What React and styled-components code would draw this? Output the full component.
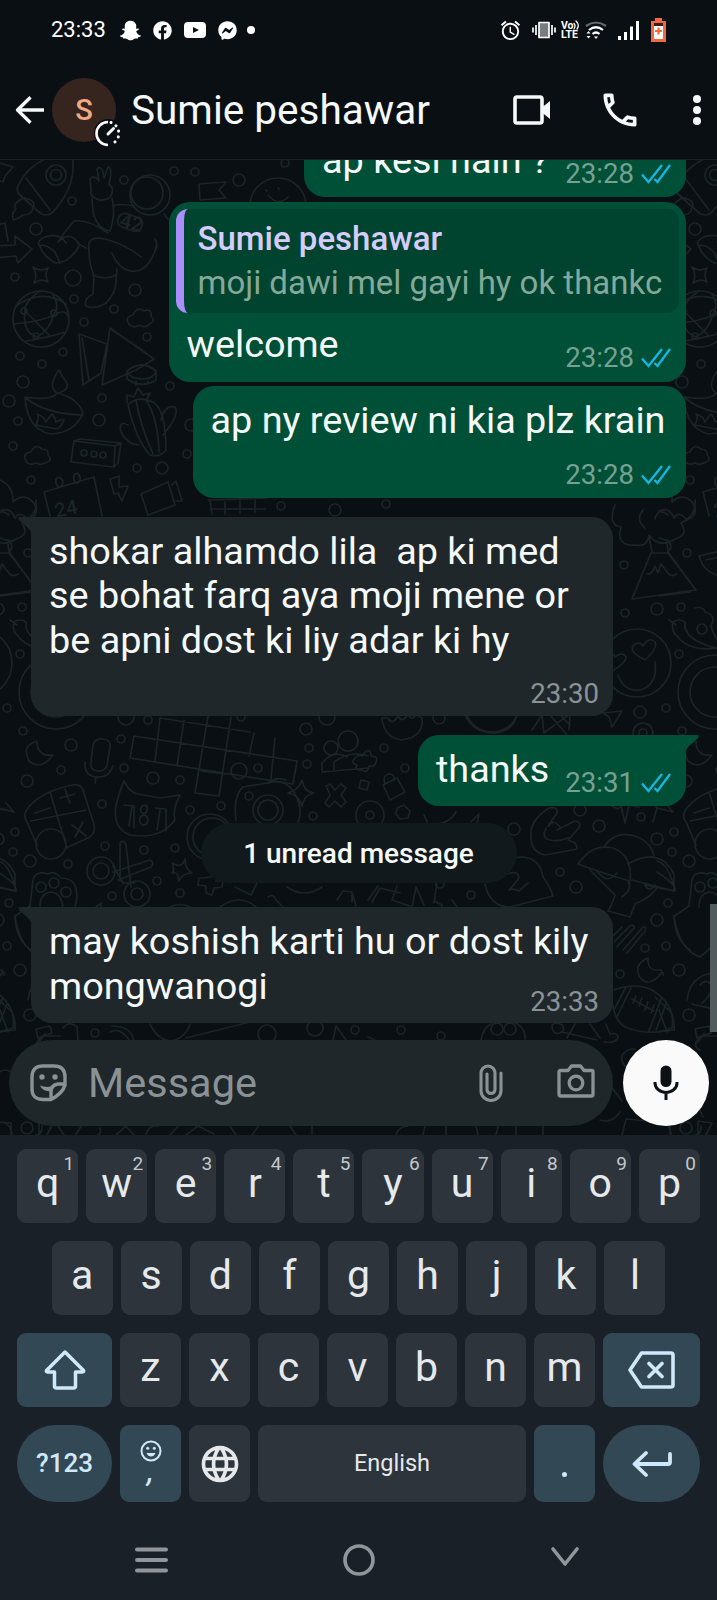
import React from 'react'
import styled, { createGlobalStyle, css } from 'styled-components'
import { FaSnapchatGhost, FaFacebook, FaFacebookMessenger } from 'react-icons/fa'
import { MdAlarm, MdOutlineCall, MdLanguage } from 'react-icons/md'

const Colors = {
  BACKGROUND: '#090f13',
  DOODLE: '#1c2427',
  BUBBLE_OUT: '#005037',
  BUBBLE_IN: '#1f272a',
  QUOTE: '#00432f',
  LILAC: '#ab8efb',
  LILAC_LIGHT: '#d6ccff',
  READ: '#17b6e2',
  MUTED: '#8a9296',
  WHITE: '#f5f9fa',
  KEYBOARD: '#1a2027',
  KEY: '#2d343b',
  KEY_BLUE: '#324955',
  KEY_ICON: '#cfe8fa',
}

const GlobalStyle = createGlobalStyle`
  * { box-sizing: border-box; }

  body {
    margin: 0;
    background: ${Colors.BACKGROUND};
    font-family: Roboto, "Liberation Sans", sans-serif;
  }

  svg { display: block; flex-shrink: 0; }
`

const Phone = styled.main`
  width: 717px;
  height: 1600px;
  display: flex;
  flex-direction: column;
  overflow: hidden;
  color: ${Colors.WHITE};
`

/* status bar */

const StatusBar = styled.div`
  height: 60px;
  padding: 0 51px;
  display: flex;
  justify-content: space-between;
  align-items: center;
  background: ${Colors.BACKGROUND};
`

const StatusGroup = styled.div`
  display: flex;
  align-items: center;
  color: #fff;
`

const Clock = styled.span`
  font-size: 22px;
  line-height: 26px;
  margin-right: 14px;
`

const StatusSlot = styled.span`
  width: ${props => props.$width}px;
  margin-left: ${props => props.$gap || 0}px;
  display: flex;
  justify-content: center;
`

const Volte = styled.span`
  position: relative;
  width: 19px;
  margin-left: 5px;
  display: flex;
  flex-direction: column;
  font-size: 10.5px;
  font-weight: 700;
  line-height: 9.5px;

  svg { position: absolute; left: 12px; top: -1px; }
`

/* header */

const Header = styled.header`
  height: 100px;
  padding: 0 15px;
  display: flex;
  align-items: center;
  background: ${Colors.BACKGROUND};
  border-bottom: 1px solid #1a2226;
`

const Avatar = styled.div`
  position: relative;
  width: 64px;
  height: 64px;
  margin-left: 7px;
  border-radius: 50%;
  background: #36251f;
  color: #f0a985;
  font-size: 29px;
  font-weight: 500;
  line-height: 64px;
  text-align: center;

  svg { position: absolute; left: 42px; top: 41px; }
`

const Title = styled.h1`
  flex: 1;
  margin: 0 0 0 15px;
  font-size: 40.5px;
  font-weight: 400;
  line-height: 48px;
  white-space: nowrap;
`

const Actions = styled.div`
  display: flex;
  align-items: center;
`

/* chat */

const Chat = styled.section`
  position: relative;
  height: 975px;
  display: flex;
  flex-direction: column;
  background: ${Colors.BACKGROUND};
`

const Wallpaper = styled.svg`
  position: absolute;
  left: 0;
  top: 0;
  fill: none;
  stroke: ${Colors.DOODLE};
  stroke-width: 1.7;
  stroke-linecap: round;
  stroke-linejoin: round;

  text {
    fill: ${Colors.DOODLE};
    stroke: none;
    font-size: 20px;
    font-weight: 500;
  }
`

const Messages = styled.div`
  position: relative;
  flex: 1;
  min-height: 0;
  padding: 0 31px 17px;
  display: flex;
  flex-direction: column;
  justify-content: flex-end;
  overflow: hidden;
`

const Bubble = styled.article`
  position: relative;
  flex-shrink: 0;
  display: grid;
  width: ${props => props.$width}px;
  height: ${props => props.$height}px;
  margin-top: ${props => props.$gap}px;
  border-radius: 21px;

  ${props => props.$out
    ? css`
      align-self: flex-end;
      background: ${Colors.BUBBLE_OUT};
      padding: 12px 15px 9.5px 18px;
      ${props.$tail && 'border-top-right-radius: 0;'}
    `
    : css`
      align-self: flex-start;
      background: ${Colors.BUBBLE_IN};
      padding: 12px 14px 7.5px 18px;
      ${props.$tail && 'border-top-left-radius: 0;'}
    `}
`

const Tail = styled.svg`
  position: absolute;
  top: 0;
  ${props => props.$out
    ? css`right: -13px; fill: ${Colors.BUBBLE_OUT}; transform: scaleX(-1);`
    : css`left: -13px; fill: ${Colors.BUBBLE_IN};`}
`

const Text = styled.p`
  grid-area: 1 / 1;
  margin: ${props => props.$top || 0}px 0 0;
  font-size: 37.8px;
  line-height: 44.6px;
  white-space: pre;
`

const Meta = styled.div`
  grid-area: 1 / 1;
  align-self: end;
  justify-self: end;
  display: flex;
  align-items: center;
  gap: 7px;
  font-size: 27.6px;
  line-height: 28px;
  color: ${props => props.$out ? '#76a192' : Colors.MUTED};
`

const Quote = styled.blockquote`
  grid-area: 1 / 1;
  align-self: start;
  height: 104.5px;
  margin: -5px -8px 0 -11px;
  padding: 8px 0 0 14px;
  border-left: 8px solid ${Colors.LILAC};
  border-radius: 12px;
  background: ${Colors.QUOTE};
  font-size: 33px;
  line-height: 44.5px;
  color: #84a99b;
  white-space: nowrap;
  overflow: hidden;
`

const QuoteName = styled.div`
  color: ${Colors.LILAC_LIGHT};
  font-weight: 500;
`

const Unread = styled.div`
  align-self: center;
  flex-shrink: 0;
  width: 316px;
  height: 60px;
  margin-top: 17px;
  border-radius: 30px;
  background: #11191c;
  font-size: 28px;
  font-weight: 500;
  line-height: 61px;
  text-align: center;
`

const Scrollbar = styled.div`
  position: absolute;
  right: 0;
  top: 744px;
  width: 7px;
  height: 128px;
  background: #545b5e;
`

const Composer = styled.footer`
  position: relative;
  display: flex;
  gap: 10px;
  padding: 0 8px 9px 9px;
`

const Field = styled.div`
  flex: 1;
  height: 86px;
  padding: 0 18px 0 21px;
  border-radius: 43px;
  display: flex;
  align-items: center;
  background: ${Colors.BUBBLE_IN};
  color: ${Colors.MUTED};
`

const Placeholder = styled.span`
  flex: 1;
  margin-left: 21px;
  font-size: 41.5px;
  line-height: 48px;
`

const FieldIcons = styled.div`
  display: flex;
  gap: 54px;
`

const MicButton = styled.button`
  width: 86px;
  height: 86px;
  padding: 0;
  border: none;
  border-radius: 50%;
  background: #fafafa;
  display: flex;
  align-items: center;
  justify-content: center;
`

/* keyboard */

const Keyboard = styled.section`
  flex: 1;
  padding: 14px 17px 0;
  background: ${Colors.KEYBOARD};
`

const KeyRow = styled.div`
  display: flex;
  gap: 8px;
  height: ${props => props.$height || 74}px;
  margin-bottom: 18px;
  padding: 0 ${props => props.$inset || 0}px;
`

const Key = styled.div`
  position: relative;
  flex: ${props => props.$width ? `0 0 ${props.$width}px` : '1 1 0'};
  display: flex;
  flex-direction: column;
  align-items: center;
  justify-content: center;
  padding-bottom: ${props => props.$letter ? 5 : 0}px;
  border-radius: ${props => props.$round ? 39 : 9}px;
  background: ${props => props.$blue ? Colors.KEY_BLUE : Colors.KEY};
  color: ${props => props.$blue ? Colors.KEY_ICON : '#e6e9ec'};
  font-size: ${props => props.$size || 41}px;
  font-weight: ${props => props.$bold ? 500 : 400};
  line-height: 1.17;
`

const Hint = styled.span`
  position: absolute;
  top: 4px;
  right: 4px;
  font-size: 19px;
  line-height: 22px;
  color: #c3c8cd;
`

const Comma = styled.span`
  height: 26px;
  font-size: 34px;
  font-style: italic;
  line-height: 16px;
`

const Dot = styled.span`
  width: 5px;
  height: 5px;
  margin-top: 22px;
  border-radius: 50%;
  background: ${Colors.KEY_ICON};
`

const NavBar = styled.nav`
  height: 80px;
  padding: 0 120px 0 118px;
  display: flex;
  align-items: center;
  justify-content: space-between;
`

/* icons */

const line = { fill: 'none', stroke: 'currentColor', strokeLinecap: 'round', strokeLinejoin: 'round' }

const YoutubeIcon = () => (
  <svg width="22" height="16" viewBox="0 0 22 16">
    <rect width="22" height="16" rx="4" fill="#fff" />
    <path d="M9 5l6 3-6 3z" fill={Colors.BACKGROUND} />
  </svg>
)

const VibrateIcon = () => (
  <svg width="24" height="18" viewBox="0 0 24 18" {...line} strokeWidth="1.7" strokeLinecap="butt">
    <rect x="7" y="1.5" width="10" height="15" fill="#777c7e" />
    <path d="M4 4v10M1 6.500v5M20 4v10M23 6.500v5" />
  </svg>
)

const WifiIcon = () => (
  <svg width="22" height="19" viewBox="0 0 22 19" {...line} strokeWidth="2.2" strokeLinecap="butt">
    <path d="M1 5Q11-2 21 5" stroke="#666b6d" />
    <path d="M4 9Q11 3.500 18 9M7.500 13Q11 10 14.500 13" />
    <path d="M9 15.500h4l-2 2.500zM3.500 10l2 2.500h-4zM1.500 15h4l-2 2.500z" fill="#fff" stroke="none" />
  </svg>
)

const SignalIcon = () => (
  <svg width="21" height="19" viewBox="0 0 21 19" fill="#fff">
    <rect x="0" y="15" width="3" height="4" />
    <rect x="6" y="11" width="3" height="8" />
    <rect x="12" y="5.500" width="3" height="13.500" />
    <rect x="18" y="0" width="3" height="19" />
  </svg>
)

const BatteryIcon = () => (
  <svg width="15" height="24" viewBox="0 0 15 24">
    <path d="M4 0h7v3h4v21H0V3h4z" fill="#f4683f" />
    <rect x="3" y="5" width="9" height="3" fill="#3a1c15" />
    <rect x="3" y="8" width="9" height="13" fill="#fff" />
    <path d="M7.500 9.500v7M4 13h7" stroke="#f4683f" strokeWidth="2.200" />
  </svg>
)

const BackIcon = () => (
  <svg width="30" height="30" viewBox="0 0 30 30" {...line} strokeWidth="3.3">
    <path d="M29 15H2.500M15.500 2.200L2.500 15l13 12.800" strokeLinecap="butt" />
  </svg>
)

const TimerIcon = () => (
  <svg width="28" height="28" viewBox="0 0 28 28">
    <circle cx="14" cy="14" r="14" fill={Colors.BACKGROUND} />
    <path d="M14 3A11.500 11.500 0 0 0 14 26" fill="none" stroke="#fff" strokeWidth="2.600" />
    <path d="M17 3.500A11.500 11.500 0 0 1 17 25.300" fill="none" stroke="#fff" strokeWidth="3" strokeLinecap="round" strokeDasharray="0.100 5.800" />
    <path d="M14 15l5.500-5.500" stroke="#fff" strokeWidth="3" strokeLinecap="round" />
  </svg>
)

const VideoIcon = () => (
  <svg width="38" height="30" viewBox="0 0 38 30">
    <rect x="2" y="2" width="27" height="26" rx="2" fill="none" stroke="currentColor" strokeWidth="3.600" />
    <path d="M29 12.500L37 6v18l-8-6.500z" fill="currentColor" />
  </svg>
)

const MoreIcon = () => (
  <svg width="10" height="32" viewBox="0 0 10 32" fill="currentColor">
    <circle cx="5" cy="5" r="4" />
    <circle cx="5" cy="16" r="4" />
    <circle cx="5" cy="27" r="4" />
  </svg>
)

const Ticks = () => (
  <svg width="30" height="20" viewBox="0 0 30 20" fill="none" stroke={Colors.READ} strokeWidth="2.300">
    <path d="M1 10.500l6.500 7.500L21 1M13.500 15l3 3L29 1" />
  </svg>
)

const StickerIcon = () => (
  <svg width="37" height="38" viewBox="0 0 37 38" {...line} strokeWidth="3.4">
    <path d="M21 35.500H13Q2 35.500 2 25V13Q2 2 13 2H24Q35 2 35 13V21Q33 29 21 35.500zM34 20H28Q21 21 21 28V35" />
    <circle cx="12" cy="13" r="2.700" fill="currentColor" stroke="none" />
    <circle cx="25" cy="13" r="2.700" fill="currentColor" stroke="none" />
    <path d="M10 21.500q8 3 14-.5l-3 6q-8 1-11-5.500z" fill="currentColor" stroke="none" />
  </svg>
)

const ClipIcon = () => (
  <svg width="24" height="38" viewBox="0 0 24 38" {...line} strokeWidth="3.1">
    <path d="M22 9v17.500a10 10 0 0 1-20 0V9a7 7 0 0 1 14 0v16.500a4 4 0 0 1-8 0V10" />
  </svg>
)

const CameraIcon = () => (
  <svg width="38" height="34" viewBox="0 0 38 34" {...line} strokeWidth="3.3">
    <path d="M3.500 6.500H11L14.500 2H23.500L27 6.500H34.500Q36 6.500 36 8V30.500Q36 32 34.500 32H3.500Q2 32 2 30.500V8Q2 6.500 3.500 6.500z" />
    <circle cx="19" cy="19" r="6.800" />
  </svg>
)

const MicIcon = () => (
  <svg width="26" height="36" viewBox="0 0 26 36" fill="none" stroke="#0b1115" strokeWidth="3">
    <rect x="7.500" y="0.500" width="11" height="21.500" rx="5.500" fill="#0b1115" stroke="none" />
    <path d="M2 17v1a11 9.500 0 0 0 22 0v-1M13 27.500V35" />
  </svg>
)

const ShiftIcon = () => (
  <svg width="42" height="40" viewBox="0 0 42 40" {...line} strokeWidth="3.5">
    <path d="M21 2L2.500 20.500Q2 22 3.500 22H10.500V36Q10.500 38 12.500 38H29.500Q31.500 38 31.500 36V22H38.500Q40 22 39.500 20.500z" />
  </svg>
)

const BackspaceIcon = () => (
  <svg width="47" height="38" viewBox="0 0 47 38" {...line} strokeWidth="3.6">
    <path d="M2 19L13.500 2H43Q45 2 45 4V34Q45 36 43 36H13.500zM21 12.500l13 13M34 12.500l-13 13" />
  </svg>
)

const SmileIcon = () => (
  <svg width="22" height="22" viewBox="0 0 22 22" {...line} strokeWidth="2">
    <circle cx="11" cy="11" r="9.500" />
    <path d="M6.500 13h9q-1.500 3.500-4.500 3.500t-4.500-3.500z" fill="currentColor" stroke="none" />
    <circle cx="7.700" cy="8.300" r="1.500" fill="currentColor" stroke="none" />
    <circle cx="14.300" cy="8.300" r="1.500" fill="currentColor" stroke="none" />
  </svg>
)

const EnterIcon = () => (
  <svg width="40" height="28" viewBox="0 0 40 28" {...line} strokeWidth="3.8">
    <path d="M38 4V12Q38 14 36 14H3M14 3L2.500 14L14 25" />
  </svg>
)

/* wallpaper doodles, [x, y, radius] */

const DOTS = [
  [174, 171, 4], [195, 172, 4], [124, 180, 4], [239, 180, 6], [72, 201, 4], [36, 229, 6],
  [15, 277, 4], [73, 278, 8], [74, 299, 4], [135, 290, 6], [84, 322, 4], [114, 309, 4],
  [147, 337, 4], [20, 356, 4], [63, 352, 4], [42, 364, 4], [23, 382, 6], [170, 386, 4],
  [9, 401, 6], [102, 398, 4], [99, 420, 6], [18, 421, 4], [187, 454, 4], [13, 446, 4],
  [191, 425, 6], [137, 468, 4], [162, 468, 6], [31, 480, 4], [285, 163, 4],
  [281, 506, 4], [335, 510, 6], [386, 504, 4],
  [28, 553, 4], [22, 607, 4], [20, 654, 4], [7, 708, 4], [23, 731, 4], [71, 745, 6],
  [121, 739, 4], [126, 717, 8], [148, 720, 4], [61, 770, 4], [27, 781, 6], [153, 778, 6],
  [180, 780, 4], [124, 768, 4], [239, 771, 8], [258, 768, 4], [306, 729, 6], [309, 748, 4],
  [307, 764, 4], [102, 804, 4], [249, 796, 4], [221, 806, 4], [190, 810, 4], [313, 816, 4],
  [241, 717, 4], [327, 717, 8], [384, 748, 4], [405, 768, 4], [439, 718, 6],
  [624, 565, 4], [625, 613, 4], [657, 609, 6], [640, 712, 6], [643, 733, 10], [643, 733, 4],
  [15, 832, 4], [13, 852, 4], [30, 861, 6], [68, 864, 4], [105, 846, 4], [144, 850, 4],
  [175, 848, 4], [112, 896, 4], [157, 881, 4], [180, 893, 4], [9, 903, 4], [7, 946, 4],
  [20, 970, 6], [30, 1015, 6], [95, 1033, 4], [27, 1128, 6], [315, 1028, 8], [355, 1030, 4],
  [267, 1034, 9], [580, 810, 6], [514, 829, 6], [599, 826, 6], [560, 872, 4], [576, 887, 6],
  [641, 817, 4], [657, 839, 6], [471, 895, 4], [440, 884, 4], [657, 920, 6], [645, 948, 4],
  [620, 974, 4], [401, 1030, 4], [441, 1036, 4],
]

const SHAPES = [
  // star, rocket and its flame
  'M-14 166L0 163L13 167L5 176L3 182L-6 178z',
  'M18 186Q26 168 45 159L72 155Q78 185 52 213Q46 217 40 213L19 194Q16 190 18 186zM26 178L50 210',
  'M20 200q-8 5-4 9q-6 6-2 11q5-2 9-5q9 0 10-7q3-7-5-9q-4-2-8 1z',
  // astronaut
  'M91 189L90 179Q94 174 99 181L97 169Q102 164 104 178L108 167Q113 168 109 184Q116 190 109 198Q98 204 91 194zM92 198Q92 228 110 231Q116 215 112 198',
  'M108 233Q88 219 74 221Q65 231 58 242M113 206Q120 203 134 206M164 214L168 219M155 239Q158 245 155 250M58 242Q70 230 79 244L86 248M40 247Q35 240 48 236Q60 233 66 243M79 246Q70 263 55 263Q42 255 40 246Q45 243 55 252L60 263',
  'M89 243Q92 236 105 239Q125 244 141 257M112 253Q118 268 130 271Q148 274 157 246M89 243Q88 262 94 275L93 294Q83 299 86 306Q95 310 106 303Q117 292 116 279L117 269M93 275Q105 281 116 275',
  'M119 217q3-5 9-3l11 4q5 3 3 8q-2 7-9 5l-11-4q-7-3-3-10z',
  // pennant, arrow, sparkle
  'M199 184l27-2l-7 8l7 8l-26 2z',
  'M-6 246L15 245V236L32 249L18 263L16 256L-6 258M-4 225L5 223L8 241',
  'M33 267q7 5 15 1q-4 7 0 14q-7-4-14 1q4-8-1-16z',
  // globe
  'M16 306Q42 288 66 304M14 324Q40 322 57 314Q65 308 69 318M26 341Q45 338 66 332M25 311Q22 332 37 337M40 291Q24 302 25 311M53 294Q60 306 54 314Q50 330 37 337M25 311L50 336',
  // cloud, papers, burger
  'M129 324q-5-7 4-9q4-9 11-4q8-3 7 5q5 5-1 8q-6 5-10 1q-7 4-11-1z',
  'M79 334L107 344L101 373L83 385zM82 338L89 380M110 328L154 359L136 370L102 385zM112 330L142 350',
  'M127 371q15-12 29 0q-2 8-14 8t-15-8zM127 371v8q15 10 29 1v-9M136 381v4M148 381v3',
  // diya
  'M25 397Q52 401 57 393Q78 398 83 413Q75 433 50 434Q27 429 25 397zM26 398Q45 414 83 415M59 370Q47 386 57 393Q69 391 67 383Q62 377 59 370zM36 425q4-9 1-11q8 3 9 8q4-6 6-8q4 5 4 8q6-3 8-2q-2 6-7 9z',
  // cactus
  'M128 405Q137 395 153 402Q166 410 166 450Q160 458 150 455Q136 440 128 405zM136 400Q140 425 153 454M146 400Q158 418 159 452M128 425Q118 420 121 432Q128 445 139 445M161 420Q164 405 175 407Q180 415 163 435M127 403l0-8 7 2 4-9 5 7 7-2-4 8',
  // brick and cloud
  'M74 441L115 446L114 467L71 462zM74 441L80 439L121 443L118 463L114 467M115 446L121 443',
  'M26 461q-4-8 5-9q4-9 11-3q7 0 6 6q5 5-1 7q-6 4-11 1q-7 3-10-2z',
  // calendar, bolt, camcorder
  'M44 492L94 477L102 516M44 492L50 516M56 479q4-4 7 2q0 6-4 6q-4-2-3-8zM74 475q4-4 6 2q1 6-4 6q-3-2-2-8z',
  'M110 479l9-3v11l9-1l-6 15l-4-8l-4 1z',
  'M141 494L168 482L175 505L148 515zM172 485l4-4l6 20l-6 0',
  'M208 500L267 498M210 500l2 14M225 502v12M240 501v12M255 500v12M210 509h55',
  // smiley faces and orange
  'M268 195q10 12 20 2M266 190l1 1M278 188l1 1',
  // clouds near the left edge
  'M0 480Q14 486 13 502Q24 492 34 503Q40 514 30 519M0 511Q10 506 15 518Q20 510 28 520M0 538L10 541Q14 548 9 552L31 582M0 596L31 592',
  // eruption
  'M615 505q-8 20 6 22q-6 20 16 18q10 2 12-10q10 14 26 4q14-4 6-16q16-8 14-23M643 510q-8 10 2 18M668 515q-10-8-13 4M649 537L652 552V553H668L667 542M632 599L651 553L668 553L696 590zM647 574q5 1 8-8l3 7l3-9l6 8q4 6 10 2',
  // melon and chili
  'M699 556l34-8l-2 27q-25 4-32-19zM706 560l22-5',
  'M673 622q6-4 12 0q-2 12 14 20q10 5 18 6q-28 4-40-12q-6-4-4-14zM669 620l7 5M695 608q8-2 10 4q12 3 6 14q2 10 14 22',
  // love eyes
  'M618 675q6 17 22 15q18-5 15-28M645 660q-16-8-12-14q6-6 10 0q6-10 12-4q3 6-10 18zM612 671q-10-10-5-16q6-4 8 2q8-6 11 0q0 6-14 14z',
  // paper plane
  'M603 713l19-2l-10 16l-3-10z',
  // crossword
  'M134 736L297 761L293 784L130 758zM160 718L155 762M184 720L177 766M208 716L195 793L219 796L231 717M254 733L249 756M275 738L271 779M160 718L250 732M201 771L225 774',
  // moon, mic
  'M37 741q-16 5-8 20q12 10 24-6q-16 2-16-14z',
  'M93 745q2-7 10-6q8 1 7 8l-3 18q-2 7-10 6q-7-1-6-8zM85 762q-1 14 12 15q12 1 16-11M96 777l-1 6',
  // calculator
  'M28 808Q40 792 72 785Q82 783 84 793L94 825Q96 834 88 838L68 847M28 808Q22 815 27 822L37 845M31 821L86 810M50 792L67 848M35 813l15-5M60 798l15-4M65 789l5 14M72 825l14 11M83 822l-8 15',
  // monster cup
  'M116 805Q120 790 124 781Q130 793 138 794L160 798L180 795Q172 810 175 820Q160 840 130 835Q112 828 116 805zM124 805l10 1v22M132 806l-3 20M155 808l11 1v22M160 810l-3 20M142 806q6-3 5 4q-1 5-5 3q-3-3 0-7zM141 816q6-3 7 4q-1 6-6 5q-4-4-1-9z',
  // camera with sparkle
  'M236 820Q233 795 243 787L268 783Q285 778 294 792Q304 810 298 822M268 783q8-7 18-3M302 780q2 12 12 13q-10 2-12 13q-3-11-14-13q11-3 14-13z',
  'M326 786l4-2l5 6l6-6l5 4l-5 7l5 7l-5 5l-6-6l-6 6l-4-4l5-8z',
  // people
  'M322 770v-7q12-14 25-6M334 770v-8q16-12 34-6M322 772l46-4',
  'M382 718q2 20 20 22q22-3 20-22l-6-4q-4 8-8 0q-6 10-10 2q-6 10-10 2zM465 715q8 18 30 18q18-2 22-18M532 730l10-15l2 18M545 732l25-18l-1 16M550 715l17 20M560 715l10 10',
  // flower, lock, square
  'M365 752q6-4 6 4q8 0 5 6q-1 5-7 4q-1 8-7 4q-8 1-5-5q-7-2-2-7q4-4 7-2z',
  'M383 785l14-7l8 14l-15 8zM385 784q-3-9 4-10q6 0 5 6M361 780l8 2l-2 8l-8-2zM397 808l7-3l6 6l-2 7l-8 1l-4-5z',
  'M612 806l6 3l3-3l4 17l4-18l10 2M653 822l4-14l-5-6M657 808l16 4l-8-9M424 815l4 9q20 2 28-12M471 822l8-8l-2 10',
  // paw
  'M30 906Q32 890 33 880Q36 870 48 874M48 874q6-4 13 4q12 0 15 10q2 12-1 18M40 907q0-14 11-15q10 1 12 15',
  // scissors
  'M120 843q4-4 6 2l5 42M120 843v38M113 872L150 860q5 3 1 7L118 880M113 866l10 17h12',
  'M172 863q10 6 13-4q0 10 7 14q-10 0-13 8q-1-10-7-8q3-3 0-10z',
  'M203 878l8-1l1-5l5 2l-1 7l7 0l-1 6l-8 1l-2 7l-6-2v-7l-8-1l1-7z',
  // pills and sparkles around the unread row
  'M235 887l16 8l6-12M287 887q17 12 35 0M268 897q5-4 8 3l6 6M337 900l6-9l9 1v10M352 892l4 14M368 900l10-14M397 886l-5 14l18 6M372 902l8-14l20 5M434 903l4-28M412 907l4-20l8 18M434 901l8 4l-1 4M452 900l5 7',
  'M220 907q20-14 36 0M170 907q10-5 20 0M96 907l5-4v4',
  // rock on
  'M531 835Q530 820 549 808Q558 806 557 813L548 826M549 826Q553 818 561 828M557 830L575 821Q583 822 578 829L568 840L575 843Q580 850 572 850L545 855Q530 852 531 835M546 828q-5 10 4 12q8 2 18-2',
  // cap
  'M485 884Q490 907 510 907L553 896Q550 886 543 877Q540 858 522 857L505 859M508 874q10-4 11 4q-4 6-10 12q4-2 10 1l9-8',
  // mushrooms
  'M578 864Q592 843 613 848Q633 856 630 881Q605 874 578 864zM604 847Q615 830 635 836Q652 842 654 857M628 864Q660 846 674 874V891L632 880M590 870L615 895Q612 905 608 911L630 917L635 904Q650 898 657 888M597 871q10 14 20 2M628 881q5 8-6 16M645 885q4 8 10 0',
  // vase at the right edge
  'M-2 872Q18 885 16 891L-14 885M-2 861Q10 864 16 891M15 916Q16 940 31 950M30 906Q22 912 15 916M674 918Q680 950 700 957Q712 948 716 940',
  // stripes, moon
  'M614 942l17-17q4 0 3 3l-17 19M623 950l20-23q4-1 2 4l-18 22M612 937l10-10',
  'M648 958q-14 6-9 18q8 12 20 0q4-4 2-6q-14 2-13-12z',
  // football
  'M614 990Q635 982 652 990Q676 1005 672 1028Q650 1037 625 1027Q614 1020 612 1000M631 988L617 1017M626 987L615 1008M661 999L649 1031M666 1004L656 1030M632 999l22 12M636 996l-3 7M642 998l-3 8M648 1002l-3 8M654 1005l-3 8',
  // snail and cones on the edges
  'M-4 997l16 15q4 10 3 18l-16 2M0 1010l8 22M0 975q6-5 4 0',
  'M687 1000q2-16 12-22q18-12 30 8M692 1004l26 6M700 985q8-8 12 2q-2 10-10 16',
  // strip above the composer
  'M150 1024q8 16 20 17q15-2 20-17M186 1038L250 1022M110 1032q10-6 20 9M112 1026q20 0 22 16M36 1029l14-3l2 7l-14 5zM63 1028q6-8 14-1l1 13M333 1040l3-14l10 14M45 1034l-6 8M375 1040l-7-3',
  'M481 1040q2-12 10-16M494 1023q12-4 22 0q10 6 9 16M552 1025q4-4 10 0q4 5-2 8q-8 2-8-8M575 1024l-8 14M590 1024l10 14M606 1024l4 10q8-2 8 4q-4 6-14 4M562 1032l35 8',
  'M627 1068q-8-8-4-14q4-5 12-5M600 1120q12 4 20-8M610 1085l12 16M700 1050q-10-5 2-14h17M697 1103l6 14M12 1072q-8-4-12 0',
  // strip below the composer
  'M0 1122q10 0 12 12M42 1126q0 9-6 9M58 1126l6 9M76 1134l6-9M100 1128q2 8-6 8M116 1135l10-9l8 9M146 1134q4-10 12-8M170 1135l8-9M186 1135l12-9l16 8M230 1126l6 9M252 1135l6-8M290 1126l6 9M312 1126v9M396 1135q2-8 12-9M425 1126l-2 9M446 1126v9M476 1126l2 9M498 1126l-2 9M516 1126v9M543 1126v9M622 1135l4-16l44 4v12M698 1135v-14l14 2l-6 12',
]

const RINGS = [
  [56, 175, 10], [56, 175, 5.5], [150, 195, 20], [147, 193, 16], [278, 206, 28], [41, 319, 28],
  [24, 311, 3], [54, 313, 3], [36, 336, 3],
  [84, 453, 3], [94, 454, 3], [103, 455, 3],
  [637, 663, 34], [56, 692, 37], [56, 692, 25],
  [51, 844, 15], [268, 810, 15], [268, 810, 10], [331, 748, 7], [348, 741, 10],
  [101, 871, 14], [101, 871, 8], [137, 894, 13], [137, 894, 6],
  [41, 887, 5], [54, 883, 5], [66, 892, 5], [210, 837, 23], [212, 837, 19],
  [370, 815, 14], [370, 815, 4], [497, 1029, 6], [510, 1029, 6], [492, 705, 27], [43, 629, 5],
]

const DoodleTile = () => (
  <g>
    {DOTS.concat(RINGS).map(([x, y, r], i) => <circle key={i} cx={x} cy={y} r={r} />)}
    {SHAPES.map((d, i) => <path key={i} d={d} />)}
    <text x="120" y="229" transform="rotate(14 130 223)">42</text>
    <text x="54" y="516" fontSize="30" transform="rotate(-12 64 506)">24</text>
  </g>
)

// the drawing repeats every 659px
const Doodles = () => (
  <Wallpaper width="717" height="975" viewBox="0 160 717 975" aria-hidden="true">
    {[-659, 0, 659].map(x => <g key={x} transform={`translate(${x} 0)`}><DoodleTile /></g>)}
  </Wallpaper>
)

const Message = ({ time, text, quote, out, tail, width, height, gap }) => (
  <Bubble $out={out} $tail={tail} $width={width} $height={height} $gap={gap}>
    {tail && (
      <Tail $out={out} width="14" height="18" viewBox="0 0 14 18">
        <path d="M2 0H14V18Q13 14 10 11L1 3Q-1 0 2 0z" />
      </Tail>
    )}
    {quote && (
      <Quote>
        <QuoteName>{quote.name}</QuoteName>
        {quote.text}
      </Quote>
    )}
    <Text $top={quote ? 108 : 0}>{text}</Text>
    <Meta $out={out}>{time}{out && <Ticks />}</Meta>
  </Bubble>
)

const LetterKeys = ({ letters, hints = '' }) => letters.split('').map((letter, i) => (
  <Key key={letter} $letter>
    {letter}
    {hints[i] && <Hint>{hints[i]}</Hint>}
  </Key>
))

const Status = () => (
  <StatusBar>
    <StatusGroup>
      <Clock>23:33</Clock>
      <StatusSlot $width={22}><FaSnapchatGhost size={21} /></StatusSlot>
      <StatusSlot $width={20} $gap={11}><FaFacebook size={19} /></StatusSlot>
      <StatusSlot $width={22} $gap={11}><YoutubeIcon /></StatusSlot>
      <StatusSlot $width={20} $gap={12}><FaFacebookMessenger size={19} /></StatusSlot>
      <StatusSlot $width={8} $gap={9}>
        <svg width="8" height="8"><circle cx="4" cy="4" r="4" fill="#fff" /></svg>
      </StatusSlot>
    </StatusGroup>
    <StatusGroup>
      <StatusSlot $width={20}><MdAlarm size={23} /></StatusSlot>
      <StatusSlot $width={24} $gap={12}><VibrateIcon /></StatusSlot>
      <Volte>
        <span>Vo</span>
        <span>LTE</span>
        <svg width="7" height="10" viewBox="0 0 7 10" {...line} strokeWidth="1.3">
          <path d="M1 3.500q2 2.500 0 5.500M3 1q4 4 1 8" />
        </svg>
      </Volte>
      <StatusSlot $width={22} $gap={5}><WifiIcon /></StatusSlot>
      <StatusSlot $width={21} $gap={11}><SignalIcon /></StatusSlot>
      <StatusSlot $width={15} $gap={12}><BatteryIcon /></StatusSlot>
    </StatusGroup>
  </StatusBar>
)

export default () => (
  <Phone>
    <GlobalStyle />
    <Status />
    <Header>
      <BackIcon />
      <Avatar>S<TimerIcon /></Avatar>
      <Title>Sumie peshawar</Title>
      <Actions>
        <VideoIcon />
        <MdOutlineCall size={44} style={{ marginLeft: 47 }} />
        <StatusSlot $width={10} $gap={50}><MoreIcon /></StatusSlot>
      </Actions>
    </Header>
    <Chat>
      <Doodles />
      <Messages>
        <Message out width={382} height={71.5} gap={0} text="ap kesi hain ?" time="23:28" />
        <Message
          out
          width={517.5}
          height={180}
          gap={4.5}
          quote={{ name: 'Sumie peshawar', text: 'moji dawi mel gayi hy ok thankc' }}
          text="welcome"
          time="23:28"
        />
        <Message out width={493.5} height={112} gap={4.5} text="ap ny review ni kia plz krain" time="23:28" />
        <Message
          tail
          width={582}
          height={199}
          gap={18.5}
          text={'shokar alhamdo lila  ap ki med\nse bohat farq aya moji mene or\nbe apni dost ki liy adar ki hy'}
          time="23:30"
        />
        <Message out tail width={268} height={71.5} gap={19} text="thanks" time="23:31" />
        <Unread>1 unread message</Unread>
        <Message
          tail
          width={582}
          height={116}
          gap={24}
          text={'may koshish karti hu or dost kily\nmongwanogi'}
          time="23:33"
        />
      </Messages>
      <Composer>
        <Field>
          <StickerIcon />
          <Placeholder>Message</Placeholder>
          <FieldIcons>
            <ClipIcon />
            <CameraIcon />
          </FieldIcons>
        </Field>
        <MicButton><MicIcon /></MicButton>
      </Composer>
      <Scrollbar />
    </Chat>
    <Keyboard>
      <KeyRow><LetterKeys letters="qwertyuiop" hints="1234567890" /></KeyRow>
      <KeyRow $inset={34.5}><LetterKeys letters="asdfghjkl" /></KeyRow>
      <KeyRow>
        <Key $blue $width={95}><ShiftIcon /></Key>
        <LetterKeys letters="zxcvbnm" />
        <Key $blue $width={97}><BackspaceIcon /></Key>
      </KeyRow>
      <KeyRow $height={77}>
        <Key $blue $round $bold $width={95} $size={26}>?123</Key>
        <Key $blue $width={61}><SmileIcon /><Comma>,</Comma></Key>
        <Key $width={61}><MdLanguage size={44} /></Key>
        <Key $size={23.5}>English</Key>
        <Key $blue $width={61}><Dot /></Key>
        <Key $blue $round $width={97}><EnterIcon /></Key>
      </KeyRow>
      <NavBar>
        <svg width="33" height="26" viewBox="0 0 33 26" {...line} stroke="#90969b" strokeWidth="4">
          <path d="M2 2.500h29M2 13h29M2 23.500h29" />
        </svg>
        <svg width="32" height="32" viewBox="0 0 32 32" {...line} stroke="#90969b" strokeWidth="3.6">
          <circle cx="16" cy="16" r="14" />
        </svg>
        <svg width="30" height="30" viewBox="0 0 30 30" {...line} stroke="#90969b" strokeWidth="3.6">
          <path d="M3 4l12 15L27 4" />
        </svg>
      </NavBar>
    </Keyboard>
  </Phone>
)
